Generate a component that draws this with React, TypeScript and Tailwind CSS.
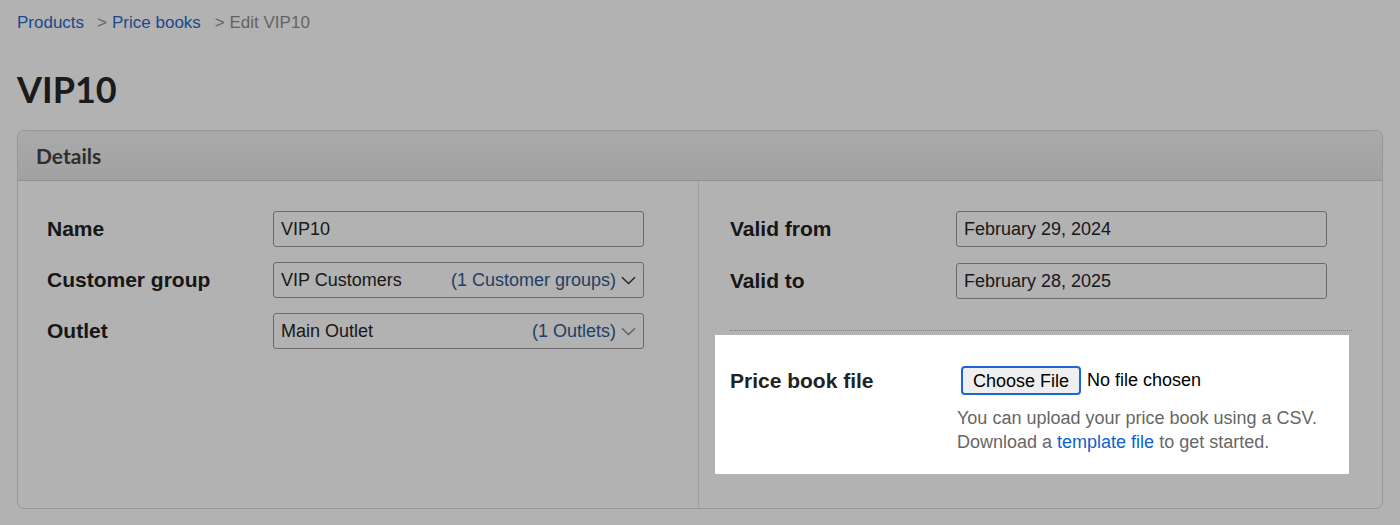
import React from 'react';

const Chevron: React.FC<{ muted?: boolean }> = ({ muted }) => (
    <svg
        className={`w-[15px] h-[9px] ml-[5px] shrink-0 ${muted ? 'text-[#8a8a8a]' : 'text-[#333]'}`}
        viewBox="0 0 15 9"
        fill="none"
        stroke="currentColor"
        strokeWidth="1.4"
    >
        <path d="M1 1.2 L7.5 7.6 L14 1.2" />
    </svg>
);

const TextField: React.FC<{ value: string }> = ({ value }) => (
    <div className="w-[371px] h-[36px] border border-[#9a9a9a] rounded-[3px] bg-white flex items-center px-[7px] text-[18px] text-[#262626]">
        {value}
    </div>
);

const SelectField: React.FC<{ value: string; count: string; muted?: boolean }> = ({ value, count, muted }) => (
    <div className="w-[371px] h-[36px] border border-[#9a9a9a] rounded-[3px] bg-white flex items-center pl-[7px] pr-[7px] text-[18px]">
        <span className="text-[#262626]">{value}</span>
        <span className="ml-auto text-[#2f5b93]">{count}</span>
        <Chevron muted={muted} />
    </div>
);

const Row: React.FC<{ label: string; children: React.ReactNode }> = ({ label, children }) => (
    <div className="flex items-center">
        <label className="w-[226px] shrink-0 text-[21px] font-bold text-[#222]">{label}</label>
        {children}
    </div>
);

const App: React.FC = () => {
    return (
        <div className="min-h-screen bg-white px-[17px] pt-[13px] font-['Liberation_Sans',Arial,sans-serif]">
            {/* Breadcrumb */}
            <nav className="h-[20px] flex items-center text-[17px]">
                <a className="text-[#2a67c9]">Products</a>
                <span className="ml-[13px] text-[#8f8f8f]">&gt;</span>
                <a className="ml-[5px] text-[#2a67c9]">Price books</a>
                <span className="ml-[14px] text-[#8f8f8f]">&gt; Edit VIP10</span>
            </nav>

            <h1 className="mt-[34px] h-[44px] leading-[44px] text-[36px] font-bold text-[#282828] font-['Lato',sans-serif]">
                VIP10
            </h1>

            {/* Details panel */}
            <div className="mt-[19px] border border-[#d6d6d6] rounded-[7px]">
                <div className="h-[50px] flex items-center pl-[18px] bg-gradient-to-b from-[#f3f3f3] to-[#e8e8e8] border-b border-[#d0d0d0] rounded-t-[7px]">
                    <h2 className="text-[21px] font-bold text-[#444] font-['Lato',sans-serif]">Details</h2>
                </div>

                <div className="grid grid-cols-[681px_1fr]">
                    {/* Left column */}
                    <div className="pt-[30px] pl-[29px] flex flex-col gap-[15px] border-r border-[#e4e4e4]">
                        <Row label="Name">
                            <TextField value="VIP10" />
                        </Row>
                        <Row label="Customer group">
                            <SelectField value="VIP Customers" count="(1 Customer groups)" />
                        </Row>
                        <Row label="Outlet">
                            <SelectField value="Main Outlet" count="(1 Outlets)" muted />
                        </Row>
                    </div>

                    {/* Right column */}
                    <div className="pt-[30px] pl-[31px] pb-[34px]">
                        <div className="flex flex-col gap-[16px]">
                            <Row label="Valid from">
                                <TextField value="February 29, 2024" />
                            </Row>
                            <Row label="Valid to">
                                <TextField value="February 28, 2025" />
                            </Row>
                        </div>

                        <div className="mt-[31px] w-[622px] border-t border-dotted border-[#bdbdbd]" />

                        {/* Highlighted upload row */}
                        <div className="relative z-10 mt-[4px] ml-[-15px] w-[634px] bg-white pl-[15px] pt-[31px] pb-[20px] shadow-[0_0_0_9999px_rgba(0,0,0,0.3)]">
                            <div className="flex">
                                <label className="w-[226px] shrink-0 h-[29px] flex items-center text-[21px] font-bold text-[#222]">
                                    Price book file
                                </label>
                                <div className="pl-[5px]">
                                    <div className="flex items-center">
                                        <button className="h-[29px] px-[10px] bg-[#efefef] border-2 border-[#1a66d6] rounded-[4px] text-[18px] text-black leading-none">
                                            Choose File
                                        </button>
                                        <span className="ml-[6px] text-[18px] text-black">No file chosen</span>
                                    </div>
                                    <p className="mt-[11px] -ml-[4px] text-[18px] leading-[24px] text-[#666]">
                                        You can upload your price book using a CSV.
                                        <br />
                                        Download a <a className="text-[#0b62d0]">template file</a> to get started.
                                    </p>
                                </div>
                            </div>
                        </div>
                    </div>
                </div>
            </div>
        </div>
    );
};

export default App;
